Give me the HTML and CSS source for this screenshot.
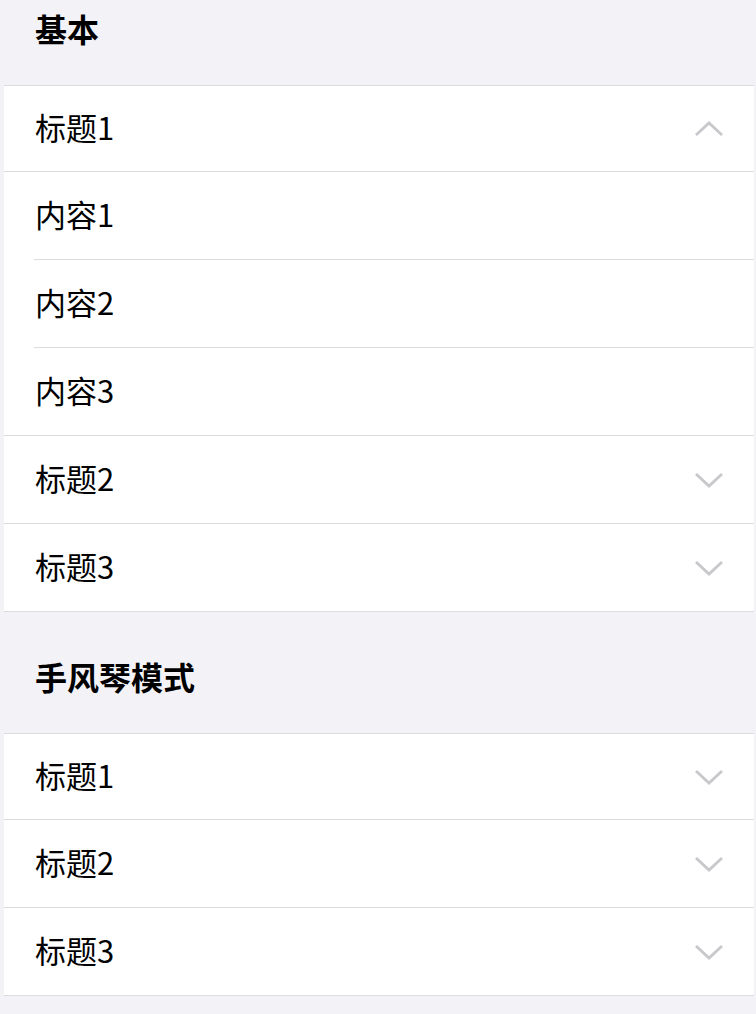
FILE: index.html
```html
<!DOCTYPE html>
<html lang="zh-CN">
<head>
    <meta charset="UTF-8">
    <meta name="viewport" content="width=device-width, initial-scale=1.0">
    <title>Collapse</title>
    <link rel="stylesheet" href="styles.css">
</head>
<body>
    <div class="page">
        <div class="section-title first">基本</div>
        <div class="collapse">
            <div class="item open">
                <div class="item-head">
                    <span>标题1</span>
                    <svg class="arrow" viewBox="0 0 30 16"><path d="M2 14 L15 2 L28 14"/></svg>
                </div>
                <div class="item-body">
                    <div class="cell">内容1</div>
                    <div class="cell">内容2</div>
                    <div class="cell">内容3</div>
                </div>
            </div>
            <div class="item">
                <div class="item-head">
                    <span>标题2</span>
                    <svg class="arrow" viewBox="0 0 30 16"><path d="M2 2 L15 14 L28 2"/></svg>
                </div>
            </div>
            <div class="item">
                <div class="item-head">
                    <span>标题3</span>
                    <svg class="arrow" viewBox="0 0 30 16"><path d="M2 2 L15 14 L28 2"/></svg>
                </div>
            </div>
        </div>

        <div class="section-title">手风琴模式</div>
        <div class="collapse">
            <div class="item">
                <div class="item-head">
                    <span>标题1</span>
                    <svg class="arrow" viewBox="0 0 30 16"><path d="M2 2 L15 14 L28 2"/></svg>
                </div>
            </div>
            <div class="item">
                <div class="item-head">
                    <span>标题2</span>
                    <svg class="arrow" viewBox="0 0 30 16"><path d="M2 2 L15 14 L28 2"/></svg>
                </div>
            </div>
            <div class="item">
                <div class="item-head">
                    <span>标题3</span>
                    <svg class="arrow" viewBox="0 0 30 16"><path d="M2 2 L15 14 L28 2"/></svg>
                </div>
            </div>
        </div>
    </div>
</body>
</html>
```

FILE: styles.css
```css
body {
    margin: 0;
    background: #f3f3f7;
    font-family: "Noto Sans CJK SC", "Noto Sans", sans-serif;
    color: #000;
}

.page {
    padding: 0 2px 20px 4px;
}

.section-title {
    height: 121px;
    box-sizing: border-box;
    padding: 0 0 37px 31px;
    display: flex;
    align-items: flex-end;
    font-size: 32px;
    font-weight: bold;
    line-height: 40px;
}

.section-title.first {
    height: 85px;
    padding-bottom: 37px;
}

.collapse {
    background: #fff;
    border-top: 1px solid #dcdcdf;
}

.item {
    border-bottom: 1px solid #dcdcdf;
}

.item-head,
.cell {
    height: 87px;
    box-sizing: border-box;
    display: flex;
    align-items: center;
    justify-content: space-between;
    padding: 0 30px 4px 31px;
    font-size: 31px;
}

.item:first-child .item-head {
    height: 85px;
}

.item.open .item-head {
    border-bottom: 1px solid #dcdcdf;
    height: 86px;
}

.item-body {
    padding-left: 30px;
}

.cell {
    padding-left: 1px;
    border-bottom: 1px solid #dcdcdf;
    height: 88px;
}

.cell:last-child {
    border-bottom: none;
    height: 87px;
}

.arrow {
    width: 30px;
    height: 16px;
    margin-top: 4px;
}

.arrow path {
    fill: none;
    stroke: #c7c7cc;
    stroke-width: 2.8;
}
```
